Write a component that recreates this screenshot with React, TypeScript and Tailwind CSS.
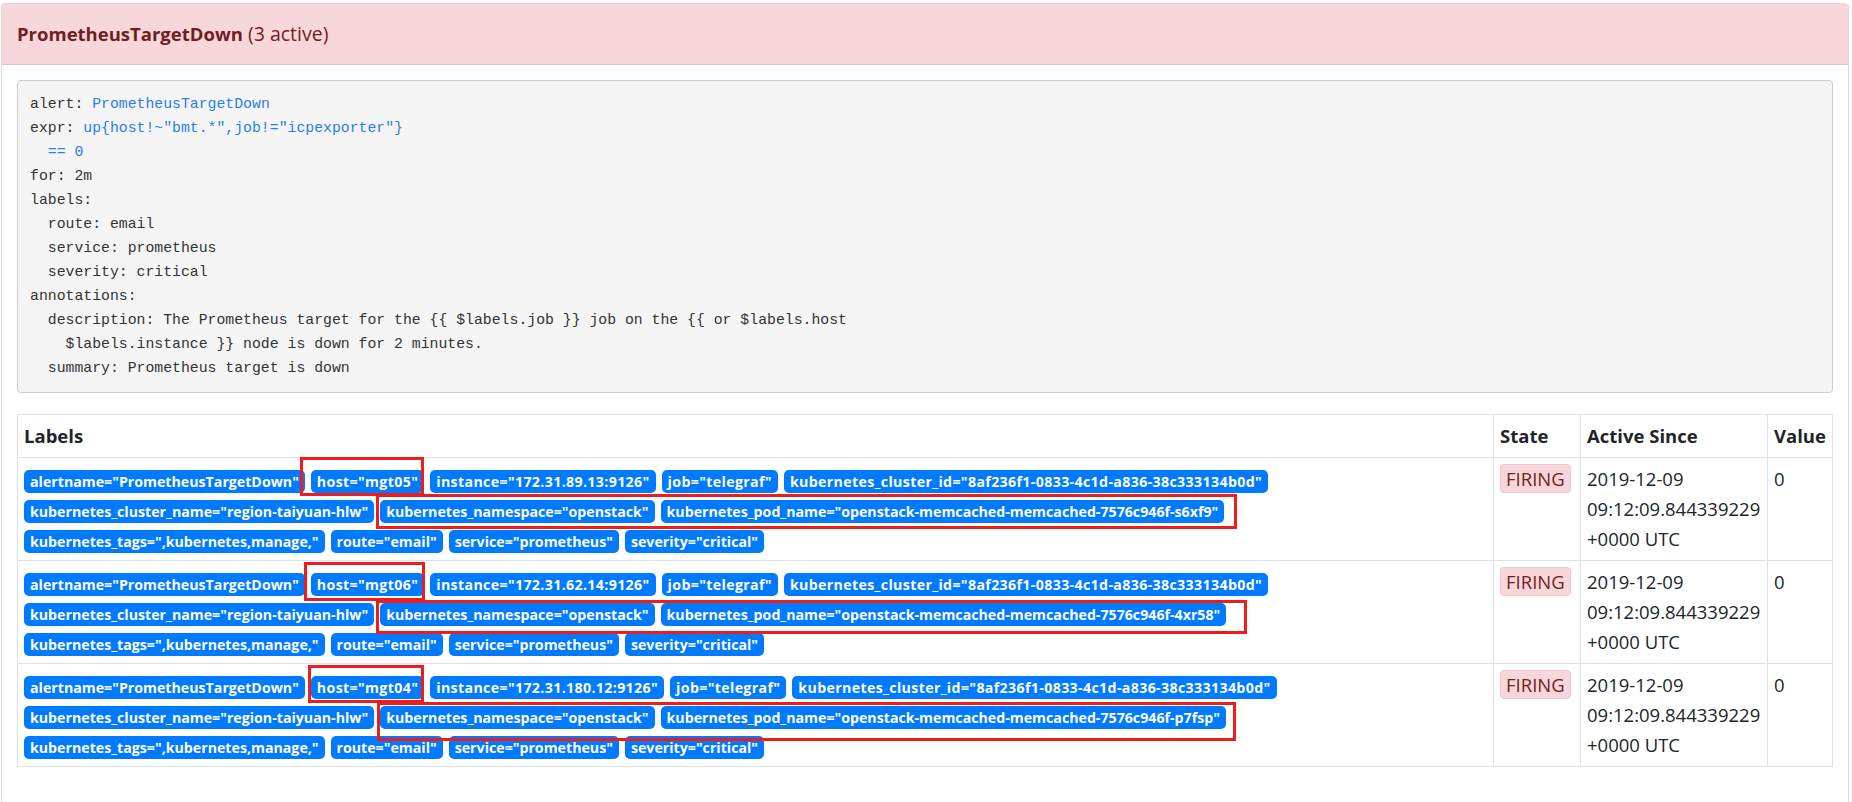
import React from "react"

const alerts = [
  { host: "mgt05", instance: "172.31.89.13:9126", pod: "openstack-memcached-memcached-7576c946f-s6xf9" },
  { host: "mgt06", instance: "172.31.62.14:9126", pod: "openstack-memcached-memcached-7576c946f-4xr58" },
  { host: "mgt04", instance: "172.31.180.12:9126", pod: "openstack-memcached-memcached-7576c946f-p7fsp" },
]

function labelLines(a: { host: string; instance: string; pod: string }) {
  return [
    [
      `alertname="PrometheusTargetDown"`,
      `host="${a.host}"`,
      `instance="${a.instance}"`,
      `job="telegraf"`,
      `kubernetes_cluster_id="8af236f1-0833-4c1d-a836-38c333134b0d"`,
    ],
    [
      `kubernetes_cluster_name="region-taiyuan-hlw"`,
      `kubernetes_namespace="openstack"`,
      `kubernetes_pod_name="${a.pod}"`,
    ],
    [`kubernetes_tags=",kubernetes,manage,"`, `route="email"`, `service="prometheus"`, `severity="critical"`],
  ]
}

function Badge({ text, wide }: { text: string; wide?: boolean }) {
  return (
    <span
      className={`inline-block whitespace-nowrap rounded-[5px] bg-[#007bff] px-[6px] py-[4.5px] text-[14.2px] font-bold leading-[14px] text-white ${
        wide ? "tracking-[0.35px]" : ""
      }`}
    >
      {text}
    </span>
  )
}

export default function App() {
  const cell = "border border-[#dee2e6] px-[6px] py-[6px]"

  return (
    <div className="relative min-h-[802px] bg-white pt-[3px] font-['Open_Sans',sans-serif] text-[18.5px] leading-[30px] text-[#212529]">
      <div className="ml-[1px] w-[1848px] min-h-[830px] rounded-t-[4px] border border-[#dcdcdc]">
        {/* Header */}
        <div className="border-b border-[#dcc4c7] bg-[#f8d7da] px-[15px] py-[15px] text-[#721c24]">
          <span className="font-bold">PrometheusTargetDown</span>
          <span className="text-[19.5px]"> (3 active)</span>
        </div>

        <div className="p-[15px]">
          {/* Rule definition */}
          <pre className="mb-[21px] whitespace-pre rounded-[4px] border border-[#cccccc] bg-[#f5f5f5] px-[12px] pt-[11px] pb-[12px] font-['Liberation_Mono',monospace] text-[14.8px] leading-[24px] text-[#333333]">
            {"alert: "}
            <span className="text-[#2b7de9]">PrometheusTargetDown</span>
            {"\nexpr: "}
            <span className="text-[#2b7de9]">{'up{host!~"bmt.*",job!="icpexporter"}\n  == 0'}</span>
            {"\nfor: 2m\nlabels:\n  route: email\n  service: prometheus\n  severity: critical\nannotations:\n"}
            {"  description: The Prometheus target for the {{ $labels.job }} job on the {{ or $labels.host\n"}
            {"    $labels.instance }} node is down for 2 minutes.\n"}
            {"  summary: Prometheus target is down"}
          </pre>

          {/* Alerts table */}
          <table className="w-full table-fixed border-collapse">
            <colgroup>
              <col />
              <col className="w-[87px]" />
              <col className="w-[187px]" />
              <col className="w-[65px]" />
            </colgroup>
            <thead>
              <tr>
                <th className={`${cell} text-left align-bottom font-bold`}>Labels</th>
                <th className={`${cell} text-left align-bottom font-bold`}>State</th>
                <th className={`${cell} text-left align-bottom font-bold`}>Active Since</th>
                <th className={`${cell} text-left align-bottom font-bold`}>Value</th>
              </tr>
            </thead>
            <tbody>
              {alerts.map((a) => (
                <tr key={a.host}>
                  <td className={`${cell} align-top`}>
                    <div className="flex flex-col gap-y-[7px] pt-[6px] pb-[1px]">
                      {labelLines(a).map((line, i) => (
                        <div key={i} className="flex gap-x-[6px]">
                          {line.map((t, j) => (
                            <Badge key={t} text={t} wide={i === 0 && j > 0} />
                          ))}
                        </div>
                      ))}
                    </div>
                  </td>
                  <td className={`${cell} align-top`}>
                    <span className="inline-block rounded-[4px] border border-[#f5c6cb] bg-[#f8d7da] px-[5px] leading-[27px] text-[#721c24]">
                      FIRING
                    </span>
                  </td>
                  <td className={`${cell} align-top`}>
                    2019-12-09
                    <br />
                    09:12:09.844339229
                    <br />
                    +0000 UTC
                  </td>
                  <td className={`${cell} align-top`}>0</td>
                </tr>
              ))}
            </tbody>
          </table>
        </div>
      </div>

      {/* Red annotation boxes drawn over the screenshot */}
      <div className="pointer-events-none absolute left-[300px] top-[457px] h-[39px] w-[124px] border-[3px] border-[#ee1c1c]" />
      <div className="pointer-events-none absolute left-[376px] top-[494px] h-[35px] w-[861px] border-[3px] border-[#ee1c1c]" />
      <div className="pointer-events-none absolute left-[304px] top-[562px] h-[39px] w-[121px] border-[3px] border-[#ee1c1c]" />
      <div className="pointer-events-none absolute left-[376px] top-[600px] h-[34px] w-[871px] border-[3px] border-[#ee1c1c]" />
      <div className="pointer-events-none absolute left-[308px] top-[665px] h-[38px] w-[116px] border-[3px] border-[#ee1c1c]" />
      <div className="pointer-events-none absolute left-[377px] top-[702px] h-[39px] w-[859px] border-[3px] border-[#ee1c1c]" />
    </div>
  )
}
